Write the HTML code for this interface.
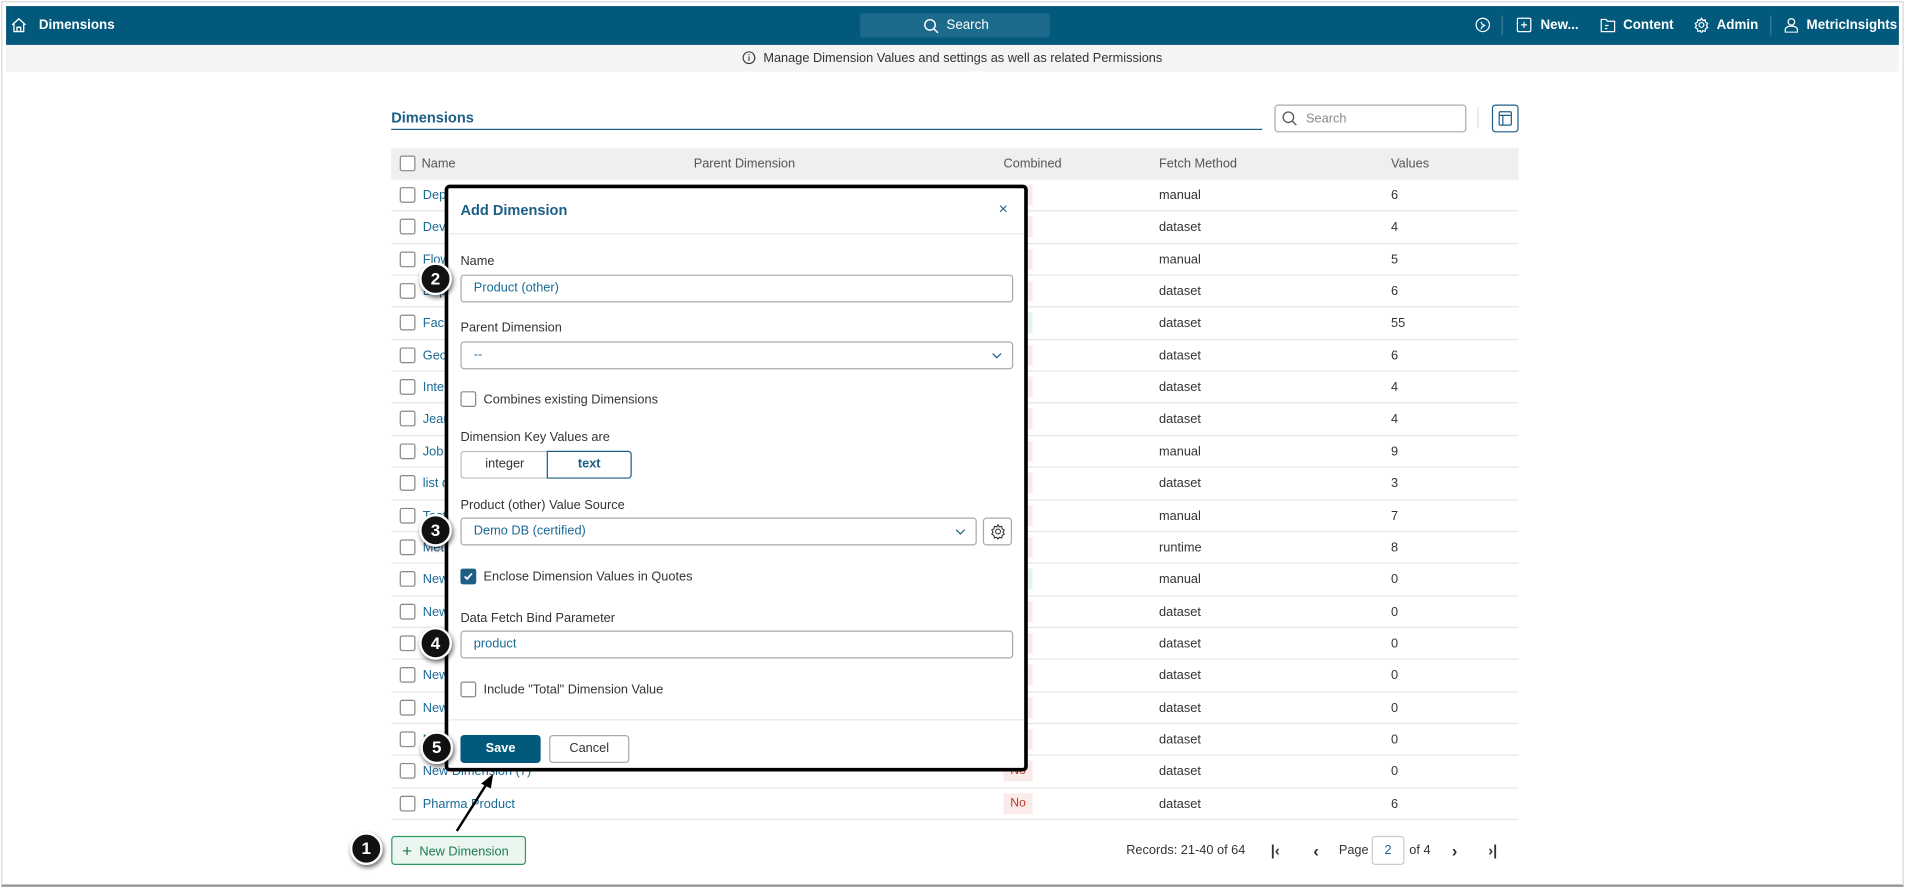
<!DOCTYPE html>
<html><head><meta charset="utf-8">
<style>
*{box-sizing:border-box;margin:0;padding:0}
html,body{width:1905px;height:888px;overflow:hidden;background:#fff}
#root{position:absolute;left:0;top:0;width:1568px;height:731px;transform:scale(1.2149);transform-origin:0 0;font-family:"Liberation Sans",Arial,sans-serif;font-size:11px;color:#333;background:#fff}
.abs{position:absolute}
.frame{left:1px;top:1px;width:1566px;height:729px;border:1px solid #d8d8d8;border-bottom:2px solid #999}
.nav{left:5px;top:5px;width:1558px;height:32px;background:#02597c;color:#fff}
.nav .t{position:absolute;top:10px;font-size:11px;font-weight:bold}
.info{left:5px;top:37px;width:1558px;height:22px;background:#f4f4f4;text-align:center;line-height:22px;font-size:10.5px;color:#333}
.row{position:absolute;left:322px;width:928px;height:26.4px;border-bottom:1px solid #e6e6e6}
.cb{position:absolute;width:13px;height:13px;border:1px solid #888;border-radius:2px;background:#fff}
.cell{position:absolute;top:7px;font-size:10.5px}
.nm{color:#1a6a96}
.badge{position:absolute;left:504px;top:4px;width:24px;height:17px;background:#fbeaea;color:#c0392b;text-align:center;line-height:17px;font-size:10px}
.badge.g{background:#e6f4ee;color:#2a8a5a}
.modal{left:366px;top:152px;width:480px;height:483px;background:#fff;border:3px solid #000;border-radius:4px}
.lbl{position:absolute;left:10px;font-size:10.5px;color:#333}
.inp{position:absolute;left:10px;width:455px;height:23px;border:1px solid #aaa;border-radius:3px;font-size:10.5px;color:#1a6a96;padding-left:10px;line-height:21px}
.chev{position:absolute;right:8px;top:8px}
.circ{position:absolute;width:27px;height:27px;border-radius:50%;background:#111;border:2px solid #fff;box-shadow:1px 2px 4px rgba(0,0,0,.6);color:#fff;font-weight:bold;font-size:14px;text-align:center;line-height:23px}
</style></head><body>
<div id="root">
<div class="abs frame"></div>
<div class="abs nav">
 <svg class="abs" style="left:4px;top:9px" width="13" height="13" viewBox="0 0 13 13" fill="none" stroke="#fff" stroke-width="1.1"><path d="M1 6.5L6.5 1.5 12 6.5M2.5 5.5V12h8V5.5M5 12V8.5h3V12"/></svg>
 <span class="t" style="left:27px">Dimensions</span>
 <div class="abs" style="left:703px;top:6px;width:156px;height:20px;background:#1d6b8c;border-radius:2px"></div>
 <svg class="abs" style="left:755px;top:10px" width="13" height="13" viewBox="0 0 13 13" fill="none" stroke="#fff" stroke-width="1.2"><circle cx="5.5" cy="5.5" r="4.3"/><path d="M8.6 8.6L12 12"/></svg>
 <span class="t" style="left:774px;font-weight:normal">Search</span>
 <svg class="abs" style="left:1209px;top:9px" width="13" height="13" viewBox="0 0 13 13" fill="none" stroke="#fff" stroke-width="1"><circle cx="6.5" cy="6.5" r="5.5"/><path d="M5 4l1 2 2 1-2 1-1 2"/></svg>
 <div class="abs" style="left:1231px;top:8px;width:1px;height:16px;background:#3c7d99"></div>
 <svg class="abs" style="left:1243px;top:9px" width="13" height="13" viewBox="0 0 13 13" fill="none" stroke="#fff" stroke-width="1"><rect x="1" y="1" width="11" height="11" rx="1"/><path d="M6.5 4v5M4 6.5h5"/></svg>
 <span class="t" style="left:1263px">New...</span>
 <svg class="abs" style="left:1312px;top:9px" width="13" height="13" viewBox="0 0 13 13" fill="none" stroke="#fff" stroke-width="1"><path d="M1 2h4l1 1.5h6V12H1z M4 7h3M4 9.5h2"/></svg>
 <span class="t" style="left:1331px">Content</span>
 <svg class="abs" style="left:1389px;top:9px" width="13" height="13" viewBox="0 0 13 13" fill="none" stroke="#fff" stroke-width="1"><circle cx="6.5" cy="6.5" r="2"/><path d="M6.5 1l1 1.7 2-.4.4 2 1.7 1-1 1.7 1 1.7-1.7 1-.4 2-2-.4-1 1.7-1-1.7-2 .4-.4-2-1.7-1 1-1.7-1-1.7 1.7-1 .4-2 2 .4z"/></svg>
 <span class="t" style="left:1408px">Admin</span>
 <div class="abs" style="left:1452px;top:8px;width:1px;height:16px;background:#3c7d99"></div>
 <svg class="abs" style="left:1463px;top:9px" width="13" height="13" viewBox="0 0 13 13" fill="none" stroke="#fff" stroke-width="1"><circle cx="6.5" cy="4" r="2.7"/><path d="M1.5 12.5v-2c0-1.5 1.5-3 5-3s5 1.5 5 3v2z"/></svg>
 <span class="t" style="left:1482px">MetricInsights</span>
</div>
<div class="abs info"><svg style="vertical-align:-2px;margin-right:6px" width="11" height="11" viewBox="0 0 11 11" fill="none" stroke="#333" stroke-width="0.9"><circle cx="5.5" cy="5.5" r="4.8"/><path d="M5.5 4.5v3.5M5.5 2.6v.9"/></svg>Manage Dimension Values and settings as well as related Permissions</div>

<div class="abs" style="left:322px;top:90px;font-size:12px;font-weight:bold;color:#1d5e85">Dimensions</div>
<div class="abs" style="left:322px;top:106px;width:717px;height:1px;background:#1d5e85"></div>
<div class="abs" style="left:1049px;top:86px;width:158px;height:23px;border:1px solid #aaa;border-radius:3px"></div>
<svg class="abs" style="left:1055px;top:91px" width="13" height="13" viewBox="0 0 13 13" fill="none" stroke="#555" stroke-width="1.1"><circle cx="5.5" cy="5.5" r="4.3"/><path d="M8.6 8.6L12 12"/></svg>
<div class="abs" style="left:1075px;top:92px;font-size:10.5px;color:#888">Search</div>
<div class="abs" style="left:1216px;top:88px;width:1px;height:18px;background:#ddd"></div>
<div class="abs" style="left:1228px;top:86px;width:22px;height:23px;border:1px solid #1d5e85;border-radius:3px"></div>
<svg class="abs" style="left:1233px;top:91px" width="12" height="13" viewBox="0 0 12 13" fill="none" stroke="#1d5e85" stroke-width="1"><rect x="1" y="1" width="10" height="11" rx="1"/><path d="M1 4h10M4 4v8"/></svg>

<div class="abs" style="left:322px;top:122px;width:928px;height:26px;background:#efefef"></div>
<div class="cb" style="left:329px;top:128px"></div>
<div class="abs" style="left:347px;top:129px;font-size:10.5px;color:#555">Name</div>
<div class="abs" style="left:571px;top:129px;font-size:10.5px;color:#555">Parent Dimension</div>
<div class="abs" style="left:826px;top:129px;font-size:10.5px;color:#555">Combined</div>
<div class="abs" style="left:954px;top:129px;font-size:10.5px;color:#555">Fetch Method</div>
<div class="abs" style="left:1145px;top:129px;font-size:10.5px;color:#555">Values</div>

<div id="rows"></div>
<script>
var d=[["Department","manual",6,0],["Device","dataset",4,0],["Flow","manual",5,0],["Dept","dataset",6,0],["Facility","dataset",55,1],["Geography","dataset",6,0],["Internal","dataset",4,0],["Jeans","dataset",4,0],["Job","manual",9,0],["list dim","dataset",3,0],["Test","manual",7,0],["Metric","runtime",8,0],["New Dimension","manual",0,1],["New Dimension (2)","dataset",0,0],["New (3)","dataset",0,0],["New Dimension (4)","dataset",0,0],["New Dimension (5)","dataset",0,0],["New (6)","dataset",0,0],["New Dimension (7)","dataset",0,0],["Pharma Product","dataset",6,0]];
var h="";for(var i=0;i<d.length;i++){var y=148+i*26.35;h+='<div class="row" style="top:'+y+'px"><div class="cb" style="left:7px;top:6px"></div><div class="cell nm" style="left:26px">'+d[i][0]+'</div><div class="badge'+(d[i][3]?' g':'')+'">'+(d[i][3]?'Yes':'No')+'</div><div class="cell" style="left:632px">'+d[i][1]+'</div><div class="cell" style="left:823px">'+d[i][2]+'</div></div>';}
document.getElementById('rows').innerHTML=h;
</script>

<div class="abs" style="left:322px;top:688px;width:111px;height:24px;border:1px solid #2e9a63;border-radius:3px;background:#ebf6f0;color:#1d7a4c;font-size:10.5px;line-height:22px;padding-left:8px"><span style="font-size:14px;vertical-align:-1px;margin-right:6px">+</span>New Dimension</div>
<div class="abs" style="left:927px;top:694px;font-size:10.5px;color:#333">Records: 21-40 of 64</div>
<div class="abs" style="left:1046px;top:693px;font-size:12px;font-weight:bold;color:#333">|&lsaquo;</div>
<div class="abs" style="left:1081px;top:692px;font-size:14px;font-weight:bold;color:#333">&lsaquo;</div>
<div class="abs" style="left:1102px;top:694px;font-size:10.5px;color:#333">Page</div>
<div class="abs" style="left:1129px;top:688px;width:27px;height:24px;border:1px solid #ccc;border-radius:3px;text-align:center;line-height:22px;color:#1a6a96;font-size:10.5px">2</div>
<div class="abs" style="left:1160px;top:694px;font-size:10.5px;color:#333">of 4</div>
<div class="abs" style="left:1195px;top:692px;font-size:14px;font-weight:bold;color:#333">&rsaquo;</div>
<div class="abs" style="left:1225px;top:693px;font-size:12px;font-weight:bold;color:#333">&rsaquo;|</div>

<div class="abs modal">
 <div class="abs" style="left:10px;top:11px;font-size:12px;font-weight:bold;color:#1d5e85">Add Dimension</div>
 <div class="abs" style="left:453px;top:9px;font-size:13px;color:#1d5e85">&times;</div>
 <div class="abs" style="left:0;top:37px;width:474px;height:1px;background:#e8e8e8"></div>
 <div class="lbl" style="top:54px">Name</div>
 <div class="inp" style="top:71px">Product (other)</div>
 <div class="lbl" style="top:109px">Parent Dimension</div>
 <div class="inp" style="top:126px">--<svg class="chev" width="9" height="6" viewBox="0 0 9 6" fill="none" stroke="#1d5e85" stroke-width="1"><path d="M1 1l3.5 3.5L8 1"/></svg></div>
 <div class="cb" style="left:10px;top:167px"></div>
 <div class="lbl" style="left:29px;top:168px">Combines existing Dimensions</div>
 <div class="lbl" style="top:199px">Dimension Key Values are</div>
 <div class="abs" style="left:10px;top:216px;width:72px;height:23px;border:1px solid #bbb;border-right:none;border-radius:3px 0 0 3px;text-align:center;line-height:21px;font-size:10.5px">integer</div>
 <div class="abs" style="left:81px;top:216px;width:70px;height:23px;border:1px solid #1d5e85;border-radius:0 3px 3px 0;text-align:center;line-height:21px;font-size:10.5px;color:#1d5e85;font-weight:bold">text</div>
 <div class="lbl" style="top:255px">Product (other) Value Source</div>
 <div class="inp" style="top:271px;width:425px">Demo DB (certified)<svg class="chev" width="9" height="6" viewBox="0 0 9 6" fill="none" stroke="#1d5e85" stroke-width="1"><path d="M1 1l3.5 3.5L8 1"/></svg></div>
 <div class="abs" style="left:440px;top:271px;width:24px;height:23px;border:1px solid #aaa;border-radius:3px"></div>
 <svg class="abs" style="left:446px;top:276px" width="13" height="13" viewBox="0 0 13 13" fill="none" stroke="#333" stroke-width="0.9"><circle cx="6.5" cy="6.5" r="2"/><path d="M6.5 1l1 1.7 2-.4.4 2 1.7 1-1 1.7 1 1.7-1.7 1-.4 2-2-.4-1 1.7-1-1.7-2 .4-.4-2-1.7-1 1-1.7-1-1.7 1.7-1 .4-2 2 .4z"/></svg>
 <div class="abs" style="left:10px;top:313px;width:13px;height:13px;background:#1d5e85;border-radius:2px"></div>
 <svg class="abs" style="left:12px;top:315px" width="9" height="9" viewBox="0 0 9 9" fill="none" stroke="#fff" stroke-width="1.5"><path d="M1.5 4.5l2 2 4-4.5"/></svg>
 <div class="lbl" style="left:29px;top:314px">Enclose Dimension Values in Quotes</div>
 <div class="lbl" style="top:348px">Data Fetch Bind Parameter</div>
 <div class="inp" style="top:364px">product</div>
 <div class="cb" style="left:10px;top:406px"></div>
 <div class="lbl" style="left:29px;top:407px">Include "Total" Dimension Value</div>
 <div class="abs" style="left:0;top:437px;width:474px;height:1px;background:#e8e8e8"></div>
 <div class="abs" style="left:10px;top:450px;width:66px;height:23px;background:#02597c;border-radius:3px;color:#fff;font-weight:bold;text-align:center;line-height:23px;font-size:10.5px">Save</div>
 <div class="abs" style="left:83px;top:450px;width:66px;height:23px;border:1px solid #aaa;border-radius:3px;text-align:center;line-height:21px;font-size:10.5px">Cancel</div>
</div>

<svg class="abs" style="left:360px;top:630px" width="60" height="60" viewBox="0 0 60 60"><path d="M16 54L42 13" stroke="#000" stroke-width="2"/><path d="M46 7L36 15 44 19z" fill="#000"/></svg>
<div class="circ" style="left:345px;top:216px">2</div>
<div class="circ" style="left:345px;top:423px">3</div>
<div class="circ" style="left:345px;top:516px">4</div>
<div class="circ" style="left:346px;top:602px">5</div>
<div class="circ" style="left:288px;top:685px">1</div>
</div>
</body></html>
